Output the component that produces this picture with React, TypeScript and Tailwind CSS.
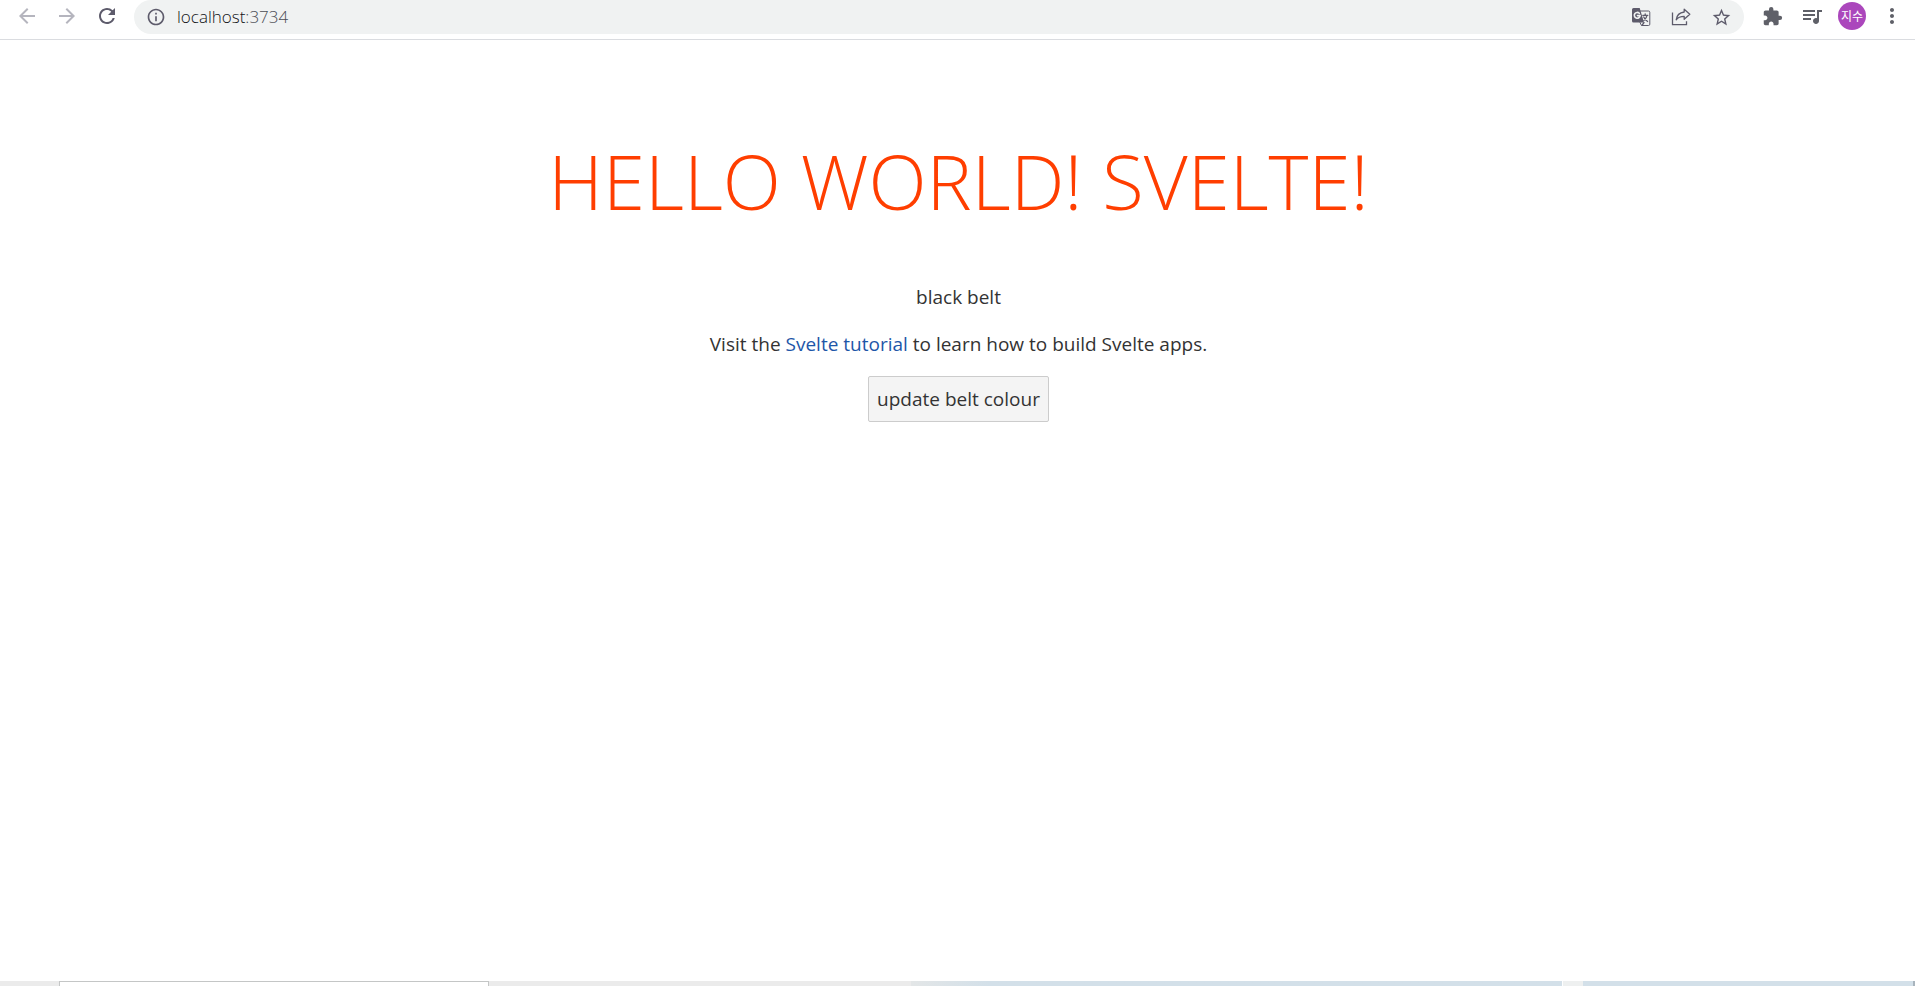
import type { ReactNode } from 'react';
import {
  MdArrowBack,
  MdArrowForward,
  MdExtension,
  MdInfoOutline,
  MdMoreVert,
  MdQueueMusic,
  MdRefresh,
  MdStarBorder,
} from 'react-icons/md';

function ToolButton({ label, children }: { label: string; children: ReactNode }) {
  return (
    <button type="button" aria-label={label} className="flex h-8 w-10 shrink-0 items-center justify-center">
      {children}
    </button>
  );
}

function TranslateIcon() {
  return (
    <svg width="20" height="20" viewBox="0 0 20 20" fill="none" stroke="currentColor" strokeLinecap="round" aria-hidden="true">
      <path d="M2.500 1h6.200l4.300 14.500H2.500A1.500 1.500 0 0 1 1 14V2.500A1.500 1.500 0 0 1 2.500 1z" fill="currentColor" stroke="none" />
      <path d="M9.500 4h8A1.300 1.300 0 0 1 18.800 5.300v11.900a1.300 1.300 0 0 1-1.300 1.300h-7l-1.500-3" />
      <path d="M8.300 6.300A2.900 2.900 0 1 0 9.100 8.600H6.500" stroke="#f0f2f2" strokeWidth="1.600" />
      <path d="M11.800 8.300h5M14.200 7v1.300M16 8.300c-.400 2.200-1.700 3.900-3.200 5.100M12.700 10c.900 1.800 2.300 3.400 3.900 4.500M11 18.300l2-2.800" strokeWidth="1.300" />
    </svg>
  );
}

function ShareIcon() {
  return (
    <svg width="20" height="20" viewBox="0 0 20 20" fill="none" stroke="currentColor" strokeWidth="1.3" aria-hidden="true">
      <path d="M1.500 5.500v12.200h14v-3.400" />
      <path d="M13.200 2.200 18.800 7.200l-5.600 5V9.400c-3.600 0-6.200.900-8 3.400.500-4.200 3.300-7.200 8-7.800z" strokeLinejoin="round" />
    </svg>
  );
}

function Toolbar() {
  return (
    <header className="flex h-10 items-start border-b border-[#dadce0] bg-white pr-[3px] pl-[7px] text-[#5f6068]">
      <nav aria-label="Browser navigation" className="flex text-[#b5b5be]">
        <ToolButton label="Back"><MdArrowBack size={24} /></ToolButton>
        <ToolButton label="Forward"><MdArrowForward size={24} /></ToolButton>
        <div className="flex text-[#5d5b6b]">
          <ToolButton label="Reload"><MdRefresh size={24} /></ToolButton>
        </div>
      </nav>
      <div className="mr-2 ml-[7px] flex h-[34px] min-w-0 flex-1 items-center rounded-full bg-[#f0f2f2] pr-[3px] pl-3 text-[#5d5b6b]">
        <MdInfoOutline size={20} className="shrink-0" />
        <div className="ml-[11px] flex-1 font-['Open_Sans',sans-serif] text-[17px] leading-6 font-light text-[#4a4c54]">
          <span className="text-[#111216]">localhost</span>:3734
        </div>
        <ToolButton label="Translate this page"><TranslateIcon /></ToolButton>
        <ToolButton label="Share this page"><ShareIcon /></ToolButton>
        <ToolButton label="Bookmark this tab"><MdStarBorder size={21} /></ToolButton>
      </div>
      <ToolButton label="Extensions"><MdExtension size={21} /></ToolButton>
      <ToolButton label="Media controls"><MdQueueMusic size={24} /></ToolButton>
      <ToolButton label="Profile">
        <span className="flex size-7 items-center justify-center rounded-full bg-[#ab47bc] font-['Noto_Sans_CJK_KR',sans-serif] text-[12px] leading-none text-white">
          지수
        </span>
      </ToolButton>
      <ToolButton label="Menu"><MdMoreVert size={24} /></ToolButton>
    </header>
  );
}

function WindowEdge() {
  return (
    <footer className="flex h-[5px] bg-[#ebebeb]">
      <div className="ml-[59px] w-[430px] border-x border-t border-[#c4c6c6] bg-white" />
      <div className="ml-auto w-[34%] bg-linear-to-r from-[#e3e6e7] to-[#d3e0e9] to-12%" />
      <div className="w-[21px] border-l border-white bg-[#eef0f0]" />
      <div className="w-[332px] border-r-2 border-[#a9b4bd] bg-[#d3e0e9]" />
    </footer>
  );
}

export default function App() {
  return (
    <div className="flex min-h-screen flex-col bg-white font-['Open_Sans',sans-serif]">
      <Toolbar />
      <main className="flex flex-1 flex-col items-center pt-[87px] pr-4 pl-[18px] text-center text-[19px] leading-7 text-[#333]">
        <h1 className="text-[76px] leading-[108px] font-light text-[#ff3e00] uppercase">
          Hello world! Svelte!
        </h1>
        <p className="mt-12">black belt</p>
        <p className="mt-[19px]">
          Visit the <a href="https://svelte.dev/tutorial" className="text-[#1e56a8]">Svelte tutorial</a> to learn how to build Svelte apps.
        </p>
        <button type="button" className="mt-[18px] rounded-xs border border-[#ccc] bg-[#f4f4f4] px-2 py-2">
          update belt colour
        </button>
      </main>
      <WindowEdge />
    </div>
  );
}
